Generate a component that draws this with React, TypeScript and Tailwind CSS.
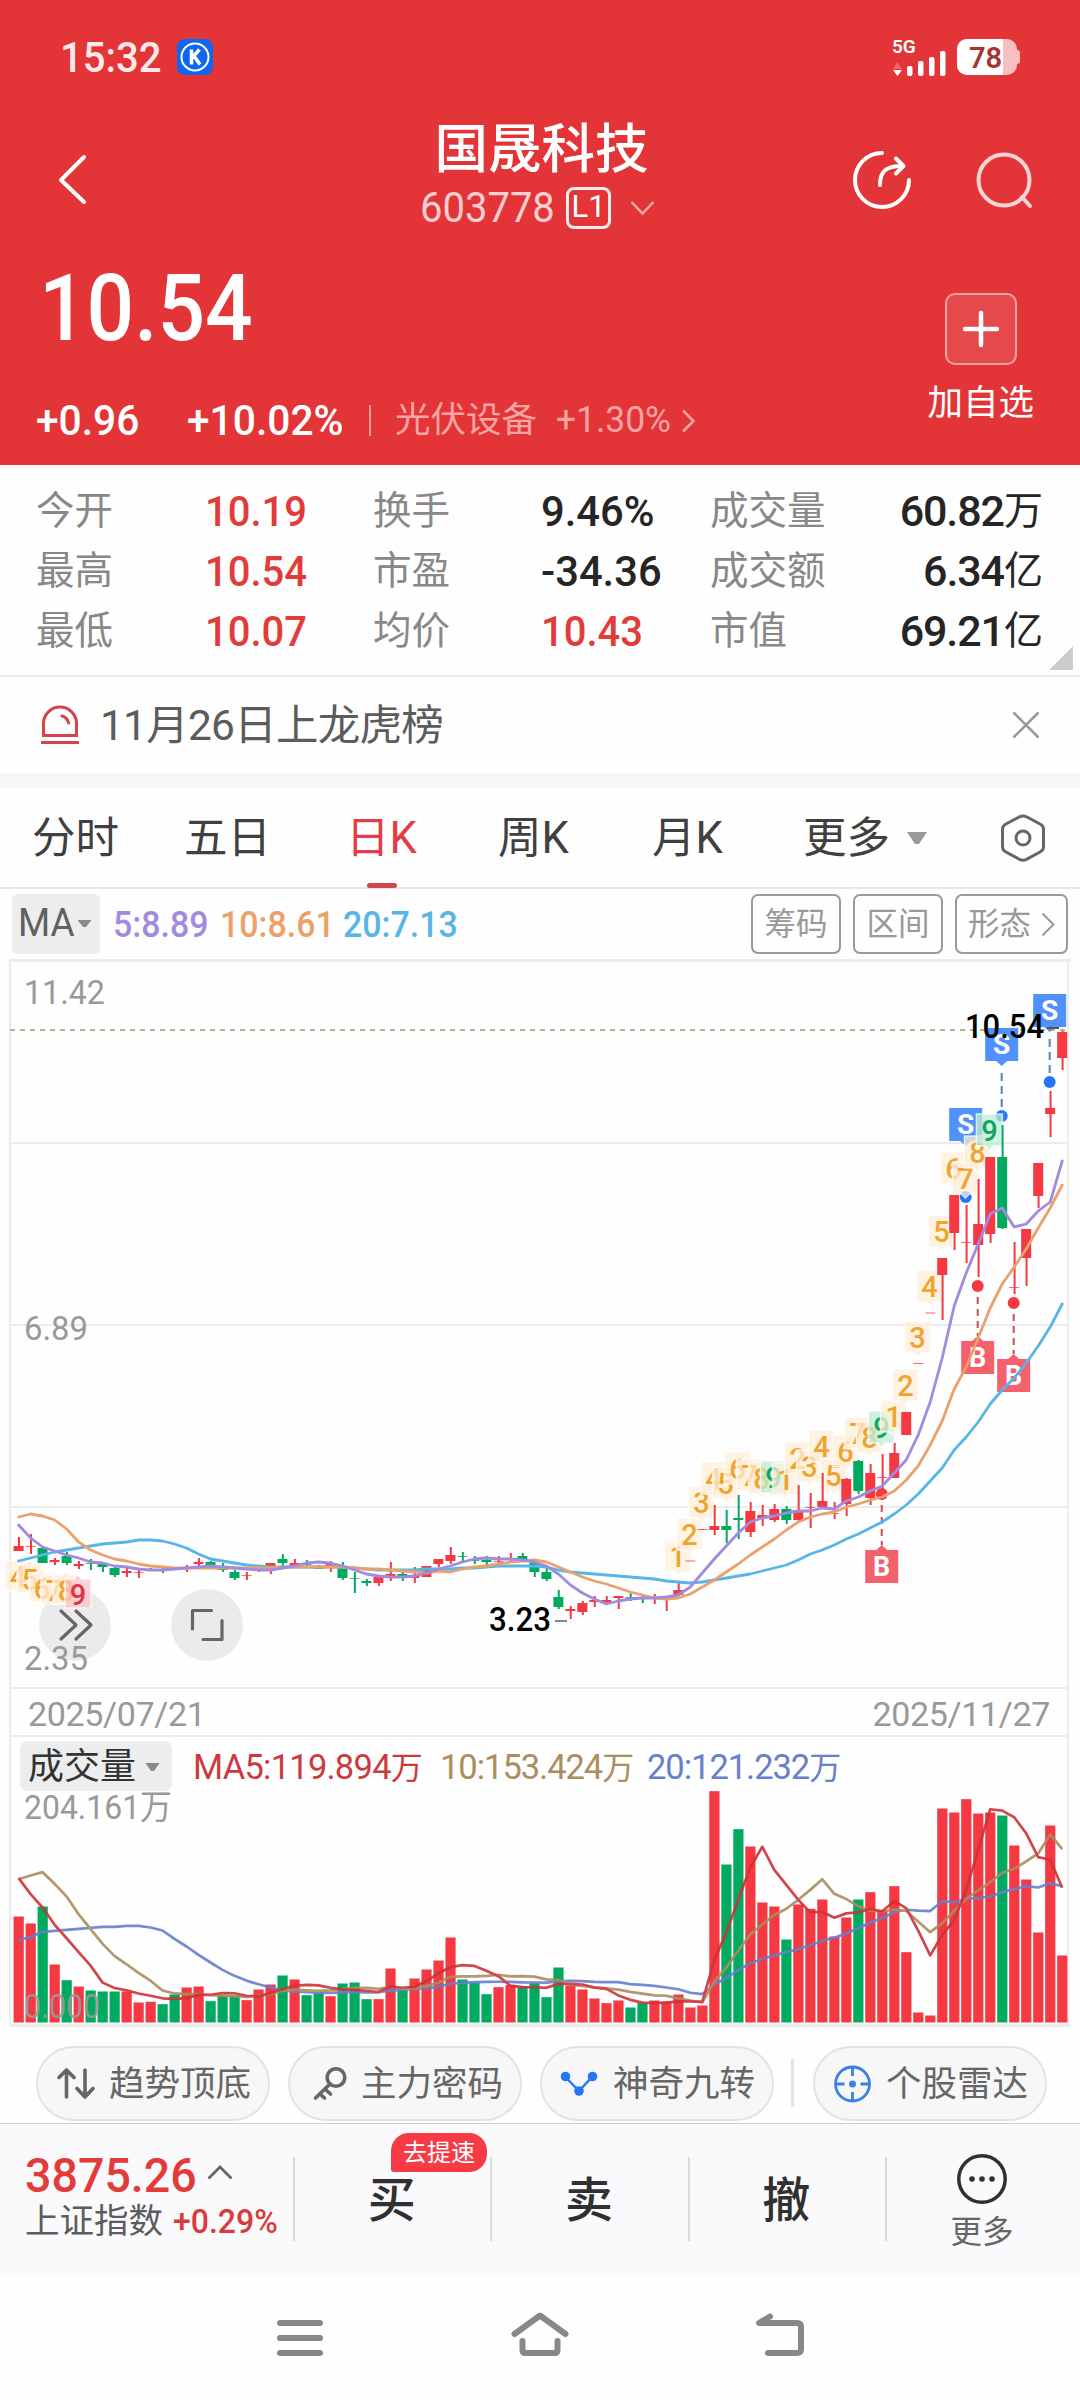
import type { ReactNode } from "react";

const FONT = "font-[Roboto,'Noto_Sans_CJK_SC',sans-serif]";
const NUM = "inline-block origin-left scale-x-[0.93] whitespace-nowrap";
const NUM_WIDE = "inline-block origin-left scale-x-[0.97] whitespace-nowrap";

const RED = "#f53842";
const GREEN = "#02aa60";

type Candle = [color: string, high: number, top: number, bottom: number, low: number];

const candles: Candle[] = [
  ["r", 1537, 1546, 1551, 1551], ["r", 1534, 1546, 1547, 1554], ["g", 1547, 1548, 1563, 1563], ["r", 1558, 1560, 1562, 1565],
  ["g", 1552, 1556, 1563, 1565], ["r", 1561, 1564, 1566, 1569], ["g", 1559, 1563, 1564, 1570], ["g", 1562, 1564, 1567, 1572],
  ["g", 1567, 1568, 1575, 1577], ["r", 1568, 1571, 1573, 1577], ["r", 1570, 1572, 1573, 1578], ["g", 1568, 1569, 1570, 1571],
  ["g", 1566, 1570, 1571, 1573], ["r", 1567, 1568, 1569, 1570], ["r", 1565, 1568, 1569, 1572], ["r", 1558, 1562, 1564, 1568],
  ["g", 1561, 1562, 1566, 1569], ["g", 1563, 1567, 1570, 1572], ["g", 1570, 1572, 1578, 1580], ["r", 1572, 1575, 1576, 1580],
  ["r", 1568, 1570, 1571, 1572], ["r", 1563, 1563, 1566, 1574], ["g", 1554, 1559, 1563, 1566], ["r", 1559, 1563, 1565, 1567],
  ["g", 1560, 1564, 1565, 1567], ["g", 1565, 1567, 1569, 1569], ["r", 1561, 1564, 1566, 1572], ["g", 1562, 1568, 1578, 1580],
  ["g", 1572, 1578, 1579, 1593], ["g", 1579, 1581, 1583, 1586], ["r", 1577, 1577, 1583, 1586], ["r", 1562, 1574, 1576, 1581],
  ["g", 1572, 1574, 1576, 1581], ["r", 1567, 1576, 1578, 1583], ["r", 1566, 1566, 1577, 1577], ["r", 1559, 1559, 1564, 1567],
  ["r", 1547, 1555, 1561, 1564], ["g", 1552, 1556, 1557, 1561], ["g", 1556, 1560, 1561, 1564], ["g", 1556, 1560, 1562, 1565],
  ["r", 1556, 1561, 1562, 1565], ["r", 1553, 1558, 1560, 1561], ["g", 1553, 1556, 1560, 1560], ["g", 1562, 1563, 1572, 1577],
  ["g", 1568, 1572, 1579, 1581], ["g", 1590, 1597, 1607, 1609], ["r", 1606, 1609, 1611, 1619], ["r", 1601, 1603, 1612, 1615],
  ["r", 1596, 1600, 1602, 1607], ["r", 1596, 1600, 1602, 1603], ["r", 1596, 1596, 1598, 1609], ["g", 1593, 1597, 1598, 1601],
  ["g", 1595, 1598, 1599, 1603], ["r", 1594, 1598, 1599, 1604], ["r", 1596, 1598, 1600, 1611], ["r", 1583, 1590, 1595, 1595],
  ["r", 1561, 1560.5, 1561.5, 1561], ["r", 1529, 1529, 1530, 1530], ["r", 1505, 1526, 1530, 1535], ["g", 1510, 1526, 1530, 1543],
  ["g", 1495, 1518, 1520, 1539], ["r", 1502, 1511, 1532, 1537], ["r", 1505, 1515, 1518, 1526], ["r", 1504, 1509, 1520, 1522],
  ["g", 1506, 1509, 1520, 1524], ["r", 1485, 1510, 1520, 1523], ["r", 1493, 1507, 1508, 1528], ["r", 1473, 1501, 1507, 1508],
  ["r", 1502, 1513, 1514, 1519], ["r", 1478, 1479, 1504, 1516], ["g", 1460, 1461, 1491, 1494], ["r", 1464, 1473, 1498, 1505],
  ["r", 1454, 1477, 1478, 1490], ["r", 1443, 1453, 1478, 1478], ["r", 1412, 1412, 1435, 1435], ["r", 1364, 1363, 1364, 1364],
  ["r", 1313, 1312.5, 1313.5, 1313], ["r", 1258, 1258, 1275, 1320], ["r", 1195, 1195, 1233, 1250], ["r", 1205, 1242, 1243, 1263],
  ["r", 1179, 1224, 1245, 1277], ["r", 1157, 1157, 1234, 1243], ["g", 1125, 1157, 1228, 1229], ["r", 1242, 1287, 1288, 1294],
  ["r", 1229, 1229, 1258, 1286], ["r", 1163, 1163, 1196, 1208], ["r", 1091, 1108, 1114, 1137], ["r", 1031, 1032, 1058, 1070],
];

const ma5 = [
  1525, 1538, 1547, 1551, 1555, 1558, 1562, 1563, 1566, 1567, 1569, 1570, 1570, 1569, 1568, 1567, 1566, 1567, 1568, 1569, 1570, 1570,
  1568, 1566, 1563, 1562, 1563, 1566, 1570, 1574, 1576, 1577, 1577, 1576, 1573, 1569, 1566, 1562, 1559, 1558, 1559, 1559, 1560, 1562,
  1566, 1574, 1585, 1593, 1599, 1604, 1601, 1599, 1598, 1598, 1597, 1595, 1587, 1573, 1559, 1546, 1533, 1522, 1518, 1516, 1513, 1511,
  1511, 1508, 1509, 1501, 1497, 1491, 1486, 1473, 1460, 1435, 1402, 1358, 1306, 1273, 1244, 1214, 1208, 1227, 1224, 1211, 1202, 1161,
];
const ma10 = [
  1517, 1514, 1516, 1520, 1529, 1542, 1550, 1555, 1559, 1561, 1564, 1566, 1567, 1568, 1568, 1568, 1568, 1568, 1568, 1568, 1568, 1568,
  1567, 1567, 1567, 1567, 1567, 1567, 1568, 1569, 1569, 1570, 1571, 1572, 1573, 1571, 1572, 1569, 1567, 1566, 1564, 1562, 1561, 1560,
  1562, 1567, 1572, 1577, 1581, 1584, 1588, 1592, 1595, 1598, 1599, 1598, 1594, 1587, 1580, 1572, 1564, 1555, 1547, 1539, 1530, 1522,
  1517, 1514, 1512, 1507, 1504, 1500, 1497, 1491, 1480, 1466, 1445, 1421, 1389, 1367, 1338, 1308, 1284, 1267, 1249, 1228, 1208, 1185,
];
const ma20 = [
  1561, 1558, 1555, 1552, 1550, 1548, 1546, 1544, 1543, 1542, 1540, 1540, 1541, 1544, 1548, 1554, 1559, 1561, 1563, 1565, 1566, 1567,
  1567, 1567, 1567, 1567, 1567, 1567, 1568, 1569, 1570, 1570, 1570, 1570, 1569, 1569, 1569, 1568, 1568, 1567, 1566, 1566, 1566, 1566,
  1567, 1570, 1572, 1573, 1574, 1575, 1576, 1577, 1578, 1579, 1581, 1582, 1583, 1582, 1580, 1578, 1576, 1574, 1571, 1568, 1565, 1560,
  1554, 1550, 1545, 1539, 1534, 1528, 1522, 1514, 1505, 1494, 1481, 1468, 1450, 1437, 1422, 1404, 1390, 1378, 1363, 1346, 1327, 1304,
];

const volumes = [
  318, 297, 348, 174, 127, 108, 96, 93, 93, 93, 60, 62, 55, 84, 105, 108, 64, 81, 81, 67, 99, 114, 141, 129, 82, 90, 79, 117, 120, 70,
  70, 162, 99, 132, 159, 186, 255, 129, 120, 85, 106, 112, 108, 118, 76, 165, 111, 99, 72, 58, 66, 45, 58, 66, 63, 84, 45, 51, 694, 474,
  580, 528, 360, 348, 249, 354, 341, 369, 258, 315, 369, 391, 336, 409, 211, 30, 21, 642, 630, 670, 627, 630, 621, 531, 429, 270, 591, 201,
];
// green volume bars, where they differ from the candle colour
const volGreen = new Set([
  2, 4, 6, 7, 8, 12, 13, 16, 17, 18, 22, 24, 25, 27, 28, 29, 32, 37, 38, 39, 42, 43, 44, 45, 51, 52, 59, 60, 64, 70, 82,
]);

const vma5Head = [433, 385, 345, 293];
const vma10Head = [430, 441, 451, 416, 378, 325, 280, 236, 199];
const vma20Head = [248, 256, 272, 275, 278, 281, 284, 287, 287, 290, 290, 285, 276, 251, 228, 203, 180, 158, 140];

const cx = (i: number) => 18.6 + i * 11.995;
const toPoints = (ys: number[]) => ys.map((y, i) => `${cx(i).toFixed(1)},${y}`).join(" ");

function movingAverage(head: number[], n: number) {
  return volumes.map((_, i) => {
    const v = i < n - 1 ? head[i] : volumes.slice(i - n + 1, i + 1).reduce((a, b) => a + b, 0) / n;
    return 2022.5 - v / 3;
  });
}

const upTags: [string, number][] = [
  ["1", 55], ["2", 56], ["3", 57], ["4", 58], ["5", 59], ["6", 60], ["7", 61], ["8", 62], ["9", 63],
  ["1", 64], ["2", 65], ["3", 66], ["4", 67], ["5", 68], ["6", 69], ["7", 70], ["8", 71], ["9", 72],
  ["1", 73], ["2", 74], ["3", 75], ["4", 76], ["5", 77], ["6", 78], ["7", 79], ["8", 80], ["9", 81],
];
const downTags: [string, number][] = [["4", 0], ["5", 1], ["6", 2], ["7", 3], ["8", 4], ["9", 5]];

function Tag({ n, x, y, down }: { n: string; x: number; y: number; down?: boolean }) {
  const nine = n === "9";
  const fill = nine ? (down ? "#f9c3c8" : "#bfecd6") : "#fdeeda";
  const color = nine ? (down ? "#dc3646" : "#12a560") : "#efa42f";
  const d = down
    ? `M${x - 13} ${y + 4}h9l4 -4l4 4h9v29h-26z`
    : `M${x - 13} ${y}h26v32h-9l-4 4l-4 -4h-9z`;
  return (
    <g>
      <path d={d} fill={fill} fillOpacity={0.75} stroke="#fff" strokeOpacity={0.7} strokeWidth={1.5} />
      <text x={x} y={down ? y + 30 : y + 27} textAnchor="middle" fontSize={29} fontWeight={500} fill={color}>{n}</text>
    </g>
  );
}

function Sell({ i, y, dot }: { i: number; y: number; dot: number }) {
  const x = cx(i) - 0.5;
  return (
    <g>
      <line x1={x} y1={y + 45} x2={x} y2={dot} stroke="#4b86b8" strokeWidth={2} strokeDasharray="8 5" />
      <circle cx={x} cy={dot} r={6} fill="#2478f8" />
      <path d={`M${x - 16.5} ${y}h33v33h-11l-5.5 5l-5.5 -5h-11z`} fill="#5191fb" />
      <text x={x} y={y + 26} textAnchor="middle" fontSize={28} fontWeight={700} fill="#fff">S</text>
    </g>
  );
}

function Buy({ i, y, dot }: { i: number; y: number; dot: number }) {
  const x = cx(i) - 0.5;
  return (
    <g>
      <line x1={x} y1={dot + 11} x2={x} y2={y - 5} stroke="#c0505a" strokeWidth={2} strokeDasharray="7 5" />
      <circle cx={x} cy={dot} r={6} fill={RED} />
      <path d={`M${x - 16.5} ${y}h11l5.5 -5l5.5 5h11v33h-33z`} fill="#f4606c" />
      <text x={x} y={y + 26} textAnchor="middle" fontSize={27} fontWeight={700} fill="#fff">B</text>
    </g>
  );
}

function PriceChart() {
  return (
    <svg className="block" width="1080" height="731" viewBox="0 959 1080 731" fontFamily="Roboto, sans-serif">
      <rect x="10" y="959" width="1061" height="3" fill="#ececec" />
      <rect x="9" y="960" width="2" height="730" fill="#ececec" />
      <rect x="1067" y="960" width="2" height="730" fill="#ececec" />
      {[1143, 1325, 1507, 1688].map((y) => (
        <rect key={y} x="10" y={y - 1} width="1058" height="2" fill="#ececec" />
      ))}
      <line x1="10" y1="1030" x2="1068" y2="1030" stroke="#c4b087" strokeWidth="2" strokeDasharray="5 5" />

      <circle cx="75" cy="1625" r="36" fill="#ebebeb" />
      <circle cx="207" cy="1625" r="36" fill="#ebebeb" />

      <Sell i={86} y={994} dot={1082} />
      <Sell i={82} y={1028} dot={1116} />
      <Sell i={79} y={1108} dot={1197} />
      {upTags.map(([n, i]) => <Tag key={i} n={n} x={cx(i) - 0.8} y={candles[i][1] - 43} />)}
      {downTags.map(([n, i]) => <Tag key={i} n={n} x={cx(i) - 0.6} y={candles[i][4] + 6} down />)}

      {candles.map(([c, high, top, bottom, low], i) => {
        const fill = c === "r" ? RED : GREEN;
        const thin = bottom - top <= 1;
        return (
          <g key={i} fill={fill}>
            <rect x={cx(i) - 0.6} y={high} width={2} height={low - high} />
            <rect x={cx(i) - 5} y={top} width={10} height={bottom - top} opacity={thin ? 0.75 : 1} />
          </g>
        );
      })}

      <Buy i={80} y={1341} dot={1286} />
      <Buy i={83} y={1359} dot={1303} />
      <Buy i={72} y={1550} dot={1494} />

      <g fill="none" stroke="#666" strokeWidth="3.2" strokeLinecap="round" strokeLinejoin="round">
        <path d="M61 1611l15 14l-15 14M76 1611l15 14l-15 14" />
        <path d="M192.500 1629v-18.500h19M203 1639.500h19v-19" />
      </g>

      <g fill="none" strokeWidth="2.8" strokeLinejoin="round" strokeLinecap="round">
        <polyline points={toPoints(ma20)} stroke="#57b5e8" />
        <polyline points={toPoints(ma10)} stroke="#e9a26c" />
        <polyline points={toPoints(ma5)} stroke="#a18bdf" />
      </g>

      <rect x="1047" y="1027" width="12" height="2" fill="#555" />
      <rect x="555" y="1620" width="12" height="2" fill="#888" />
      <g fontSize="34">
        <text x="24" y="1004" textLength="81" lengthAdjust="spacingAndGlyphs" fill="#999">11.42</text>
        <text x="24" y="1340" textLength="64" lengthAdjust="spacingAndGlyphs" fill="#999">6.89</text>
        <text x="24" y="1670" textLength="64" lengthAdjust="spacingAndGlyphs" fill="#999">2.35</text>
        <text x="965" y="1038" textLength="79" lengthAdjust="spacingAndGlyphs" fontWeight="500" fill="#000">10.54</text>
        <text x="489" y="1631" textLength="62" lengthAdjust="spacingAndGlyphs" fontWeight="500" fill="#000">3.23</text>
      </g>
    </svg>
  );
}

function VolumeChart() {
  return (
    <svg className="block overflow-visible" width="1080" height="237" viewBox="0 1791 1080 237" fontFamily="Roboto, 'Noto Sans CJK SC', sans-serif">
      <rect x="9" y="1791" width="2" height="235" fill="#ececec" />
      <rect x="1067" y="1791" width="2" height="235" fill="#ececec" />
      <rect x="9" y="2024" width="1062" height="3" fill="#ececec" />
      {volumes.map((v, i) => (
        <rect key={i} x={cx(i) - 5} y={2022.5 - v / 3} width={10.2} height={v / 3} fill={volGreen.has(i) ? GREEN : RED} />
      ))}
      <g fill="none" strokeWidth="2.7" strokeLinejoin="round" opacity="0.9">
        <polyline points={toPoints(movingAverage(vma20Head, 20))} stroke="#6680cc" />
        <polyline points={toPoints(movingAverage(vma10Head, 10))} stroke="#ab8d5f" />
        <polyline points={toPoints(movingAverage(vma5Head, 5))} stroke="#cc3338" />
      </g>
      <text x="24" y="1819" fontSize="34" textLength="148" lengthAdjust="spacingAndGlyphs" fill="#999">204.161万</text>
      <text x="24" y="2018" fontSize="34" textLength="76" lengthAdjust="spacingAndGlyphs" fill="#999" opacity="0.9">0.000</text>
    </svg>
  );
}

function Header() {
  return (
    <header className="h-[465px] bg-[#e33537] text-white">
      <div className="flex h-[114px] items-center justify-between pr-[60px] pl-[60px]">
        <div className="flex items-center">
          <span className={`${NUM} w-[117px] text-[43px] font-medium text-[#ffe9e9]`}>15:32</span>
          <svg width="36" height="36" viewBox="0 0 36 36">
            <rect width="36" height="36" rx="8" fill="#0f66f0" />
            <circle cx="18" cy="18" r="13.500" fill="none" stroke="#fff" strokeWidth="2" />
            <path d="M14.500 10.500v15M22.500 10.500l-7.500 8.500M17 17l6 8.500" fill="none" stroke="#fff" strokeWidth="3.500" />
          </svg>
        </div>
        <div className="flex items-center">
          <div className="mr-[10px] flex h-[38px] w-[55px] flex-col justify-between">
            <span className="h-[16px] text-[19px] leading-[18px] font-semibold">5G</span>
            <svg className="-mt-[8px]" width="55" height="27" viewBox="0 0 55 27">
              <path d="M1 20l4.500-7l4.500 7z" fill="#f0686a" />
              <path d="M1 21l4.500 6l4.500-6z" fill="#fff" />
              <g fill="#fff">
                <rect x="15" y="17" width="5.500" height="10" rx="2" />
                <rect x="26" y="12" width="5.500" height="15" rx="2" />
                <rect x="37" y="8" width="5.500" height="19" rx="2" />
                <rect x="48" y="2" width="5.500" height="25" rx="2" />
              </g>
            </svg>
          </div>
          <div className="flex items-center">
            <div className="flex h-[36px] w-[60px] items-center overflow-hidden rounded-[10px] bg-[#f6c0c1]">
              <div className="h-full w-[46px] bg-white pl-[12px] text-[30px] leading-[38px] font-semibold text-[#a93334]">
                <span className={NUM_WIDE}>78</span>
              </div>
            </div>
            <div className="h-[14px] w-[3px] rounded-r bg-[#f6c0c1]" />
          </div>
        </div>
      </div>

      <div className="flex h-[132px] items-center justify-between pr-[46px] pl-[56px]">
        <svg className="mr-[143px]" width="32" height="52" viewBox="0 0 32 52" fill="none" stroke="#fff" strokeWidth="4">
          <path d="M28 3L5 26l23 22" strokeLinecap="round" strokeLinejoin="round" />
        </svg>
        <div className="flex flex-col items-center pb-[10px]">
          <span className="h-[65px] text-[53.500px] leading-[67px] font-medium">国晟科技</span>
          <div className="flex h-[54px] items-center pr-[8px]">
            <span className={`${NUM} w-[146px] text-[43px] text-[#fbcfcf]`}>603778</span>
            <span className="flex h-[42px] w-[45px] items-center justify-center rounded-[8px] border-[3px] border-white/90 text-[31px]">
              L1
            </span>
            <svg className="ml-[19px]" width="25" height="16" viewBox="0 0 25 16" fill="none" stroke="#f5a9aa" strokeWidth="2.500">
              <path d="M1.500 2l11 11.500l11-11.500" />
            </svg>
          </div>
        </div>
        <div className="flex items-center gap-[62px]">
          <svg width="60" height="60" viewBox="0 0 60 60" fill="none" stroke="#fff" strokeWidth="4" strokeLinecap="round">
            <path d="M30 3a27 27 0 1 0 27 27" />
            <path d="M28 35c0-13 5-19 22-19M44 8.500l7.500 7.500l-7.500 7.500" strokeLinejoin="round" />
          </svg>
          <svg width="60" height="60" viewBox="0 0 60 60" fill="none" stroke="#f5d3d3" strokeWidth="4" strokeLinecap="round">
            <circle cx="30" cy="30" r="25.500" />
            <path d="M48 47l8 9" />
          </svg>
        </div>
      </div>

      <div className="flex justify-between">
        <div className="pl-[36px]">
          <div className="mt-[12px] h-[103px] pl-[3px] text-[92px] leading-[101px] font-medium">
            <span className="inline-block origin-left scale-x-[0.91]">10.54</span>
          </div>
          <div className="mt-[37px] flex h-[45px] items-center text-[42px]">
            <span className={`${NUM_WIDE} w-[151px] font-medium`}>+0.96</span>
            <span className={`${NUM_WIDE} w-[182px] font-medium`}>+10.02%</span>
            <span className="h-[31px] w-[2px] bg-white/50" />
            <span className="ml-[24px] w-[161px] text-[35.500px] text-[#f7a4a5]">光伏设备</span>
            <span className={`${NUM_WIDE} w-[125px] text-[36.500px] text-[#f7a4a5]`}>+1.30%</span>
            <svg width="15" height="24" viewBox="0 0 15 24" fill="none" stroke="#f7a4a5" strokeWidth="2.500">
              <path d="M2 1.500l10.500 10.500l-10.500 10.500" />
            </svg>
          </div>
        </div>
        <div className="mr-[46px] flex flex-col items-center">
          <div className="mt-[47px] flex size-[72px] items-center justify-center rounded-[10px] border-2 border-white/50 bg-white/10">
            <svg width="38" height="38" viewBox="0 0 38 38" stroke="#fff" strokeWidth="4.500" strokeLinecap="round">
              <path d="M19 3v32M3 19h32" />
            </svg>
          </div>
          <span className="mt-[15px] text-[35.500px] leading-[46px]">加自选</span>
        </div>
      </div>
    </header>
  );
}

const stats = [
  ["今开", "10.19", "换手", "9.46%", "成交量", "60.82万"],
  ["最高", "10.54", "市盈", "-34.36", "成交额", "6.34亿"],
  ["最低", "10.07", "均价", "10.43", "市值", "69.21亿"],
];

function Stats() {
  return (
    <section className="relative h-[212px] border-b-2 border-[#ebebeb] pt-[16px] text-[#252525]">
      {stats.map((r, k) => (
        <div key={r[0]} className="flex h-[60px] items-center pr-[37px] pl-[36px] text-[43px]">
          <span className="w-[169px] text-[38.500px] text-[#888]">{r[0]}</span>
          <span className={`${NUM} mr-[-12px] w-[180px] font-medium text-[#e23c3a]`}>{r[1]}</span>
          <span className="w-[168px] text-[38.500px] text-[#888]">{r[2]}</span>
          <span className={k === 2 ? `${NUM} mr-[-12px] w-[181px] font-medium text-[#e23c3a]` : `${NUM_WIDE} mr-[-12px] w-[181px] font-medium`}>{r[3]}</span>
          <span className="text-[38.500px] text-[#888]">{r[4]}</span>
          <span className="ml-auto flex items-center tracking-[-0.025em]">
            <span className="font-medium">{r[5].slice(0, -1)}</span>
            <span className="text-[39px] tracking-normal">{r[5].slice(-1)}</span>
          </span>
        </div>
      ))}
      <svg className="absolute right-[7px] bottom-[5px]" width="24" height="24">
        <path d="M24 0v24h-24z" fill="#ccc" />
      </svg>
    </section>
  );
}

function Notice() {
  return (
    <section className="flex h-[96px] items-center pr-[40px] pl-[41px]">
      <svg width="38" height="40" viewBox="0 0 38 40" fill="none" stroke="#d5444a" strokeWidth="3">
        <path d="M2.500 30.500v-12a16.500 16.500 0 0 1 33 0v12z" />
        <path d="M21 11c3.500 1 6 3.500 6.500 7M1 37.500h36" strokeLinecap="round" />
      </svg>
      <span className="ml-[21px] pt-[2px] text-[42.500px] tracking-[-0.018em] text-[#5c5c5c]">11月26日上龙虎榜</span>
      <svg className="ml-auto" width="28" height="28" viewBox="0 0 28 28" stroke="#999" strokeWidth="2.500">
        <path d="M1.500 1.500l25 25M26.500 1.500l-25 25" />
      </svg>
    </section>
  );
}

function Tabs() {
  return (
    <nav className="relative flex h-[101px] items-center border-b-2 border-[#e9e9e9] pl-[32px] text-[43.500px] text-[#404040]">
      <span className="w-[152px] pt-[3px]">分时</span>
      <span className="w-[162px] pt-[3px]">五日</span>
      <span className="w-[152px] pt-[3px] text-[#e33c46]">日K</span>
      <span className="w-[154px] pt-[3px]">周K</span>
      <span className="w-[151px] pt-[3px]">月K</span>
      <span className="w-[103px] pt-[3px]">更多</span>
      <svg width="22" height="14"><path d="M1 1h20l-8 12h-4z" fill="#999" /></svg>
      <svg className="ml-[72px]" width="46" height="48" viewBox="0 0 46 48" fill="none" stroke="#666" strokeWidth="3">
        <path d="M19.500 2.800q3.500-1.700 7 0l14 7.500q3 1.700 3 5v17.500q0 3.300-3 5l-14 7.500q-3.500 1.700-7 0l-14-7.500q-3-1.700-3-5v-17.500q0-3.300 3-5z" />
        <circle cx="23" cy="24" r="7" />
      </svg>
      <span className="absolute bottom-[-1px] left-[367px] h-[5px] w-[30px] rounded-full bg-[#d4464e]" />
    </nav>
  );
}

function Indicators() {
  return (
    <div className="flex h-[70px] items-center pr-[12px] pb-[1px] pl-[12px] text-[36.500px] font-medium">
      <span className="flex h-[60px] w-[88px] items-center rounded-[6px] bg-[#ededed] pl-[6px] text-[38px] font-normal text-[#606060]">
        <span className="w-[59px]"><span className={NUM_WIDE}>MA</span></span>
        <svg width="15" height="10"><path d="M0.500 1h14l-5.500 7h-3z" fill="#8a8a8a" /></svg>
      </span>
      <span className={`${NUM} mt-[3px] ml-[13px] w-[107px] text-[#a18bdf]`}>5:8.89</span>
      <span className={`${NUM} mt-[3px] w-[123px] text-[#eda067]`}>10:8.61</span>
      <span className={`${NUM} mt-[3px] text-[#57b5e8]`}>20:7.13</span>
      <div className="ml-auto flex gap-[12px] text-[31.500px] font-normal text-[#999]">
        <span className="flex h-[60px] w-[90px] items-center justify-center rounded-[7px] border-2 border-[#999] pt-[2px]">筹码</span>
        <span className="flex h-[60px] w-[90px] items-center justify-center rounded-[7px] border-2 border-[#999] pt-[2px]">区间</span>
        <span className="flex h-[60px] w-[113px] items-center justify-center gap-[10px] rounded-[7px] border-2 border-[#999] pt-[2px]">
          形态
          <svg width="14" height="25" viewBox="0 0 14 25" fill="none" stroke="#999" strokeWidth="2"><path d="M1.500 1.500l11 11l-11 11" /></svg>
        </span>
      </div>
    </div>
  );
}

function VolumeHeader() {
  return (
    <div className="mr-[11px] ml-[9px] flex h-[54px] items-center border-x-2 border-[#ececec] pt-[3px] pl-[9px] text-[34.500px]">
      <span className="flex h-[50px] w-[152px] items-center justify-between rounded-[8px] bg-[#ededed] pt-[3px] pr-[12px] pl-[8px] text-[36px] text-[#333]">
        成交量
        <svg width="15" height="10"><path d="M0.500 1h14l-5.500 8h-3z" fill="#8a8a8a" /></svg>
      </span>
      <span className="mt-[5px] ml-[21px] w-[247px] tracking-[-0.022em] text-[#cb3b3d]">MA5:119.894<span className="text-[32px]">万</span></span>
      <span className="mt-[5px] w-[207px] tracking-[-0.03em] text-[#ab8d5f]">10:153.424<span className="text-[32px]">万</span></span>
      <span className="mt-[5px] tracking-[-0.03em] text-[#6680cc]">20:121.232<span className="text-[32px]">万</span></span>
    </div>
  );
}

function Pill({ icon, children }: { icon: ReactNode; children: ReactNode }) {
  return (
    <span className="flex h-[75px] w-[234px] shrink-0 items-center rounded-full border-2 border-[#e3e3e3] bg-[#f7f7f7] pl-[17px] text-[35.500px] whitespace-nowrap text-[#666]">
      <span className="w-[54px]">{icon}</span>
      <span className="pt-[2px]">{children}</span>
    </span>
  );
}

function Pills() {
  return (
    <div className="flex h-[95px] items-start pt-[18px] pl-[36px]">
      <div className="flex gap-[18px]">
        <Pill
          icon={
            <svg width="40" height="36" viewBox="0 0 40 36" fill="none" stroke="#666" strokeWidth="3.600" strokeLinecap="round" strokeLinejoin="round">
              <path d="M11.500 31v-27M4 11.500l7.500-7.500l7.500 7.500M30 4v27M22 22.500l8 8.500l8-8.500" />
            </svg>
          }
        >
          趋势顶底
        </Pill>
        <Pill
          icon={
            <svg width="42" height="40" viewBox="0 0 42 40" fill="none" stroke="#666" strokeWidth="3.600" strokeLinecap="round">
              <circle cx="29" cy="13.500" r="8.800" />
              <path d="M23 20L8.500 34M13 30l4.500 4M18.500 25.500l5 4.500" />
            </svg>
          }
        >
          主力密码
        </Pill>
        <Pill
          icon={
            <svg width="40" height="36" viewBox="0 0 40 36" fill="#2478f5">
              <path d="M6 10.500l14 14.500l13.500-14.500" fill="none" stroke="#2478f5" strokeWidth="2.500" />
              <circle cx="6.500" cy="10.500" r="4.800" />
              <circle cx="33.500" cy="10.500" r="4.800" />
              <circle cx="20" cy="25" r="4.800" />
            </svg>
          }
        >
          神奇九转
        </Pill>
      </div>
      <span className="mt-[13px] ml-[17px] h-[48px] w-[3px] bg-[#e3e3e3]" />
      <span className="ml-[19px]">
        <Pill
          icon={
            <svg width="40" height="40" viewBox="0 0 40 40" fill="none" stroke="#3d7fe8" strokeWidth="2.800">
              <circle cx="20.500" cy="20" r="17" />
              <path d="M20.500 3v9M20.500 28v9M3.500 20h9M28.500 20h9" />
              <circle cx="20.500" cy="20" r="3.500" fill="#3d7fe8" stroke="none" />
            </svg>
          }
        >
          个股雷达
        </Pill>
      </span>
    </div>
  );
}

function TradeBar() {
  return (
    <div className="flex h-[151px] border-t border-[#cfcfcf] bg-[#fafafc] text-[48px] font-medium text-[#303030]">
      <div className="w-[293px] pt-[26px] pl-[25px]">
        <div className="flex h-[52px] items-center text-[#e23c3a]">
          <span className={`${NUM_WIDE} w-[182px]`}>3875.26</span>
          <svg className="-mt-[8px]" width="26" height="15" viewBox="0 0 26 15" fill="none" stroke="#666" strokeWidth="2.800">
            <path d="M1.500 13.500l11.500-11.500l11.500 11.500" />
          </svg>
        </div>
        <div className="flex h-[40px] items-center font-normal">
          <span className="w-[148px] text-[34.500px] whitespace-nowrap text-[#5c5c5c]">上证指数</span>
          <span className={`${NUM_WIDE} text-[33px] font-medium text-[#d93b3c]`}>+0.29%</span>
        </div>
      </div>
      {["买", "卖", "撤"].map((t) => (
        <div key={t} className="relative mt-[33px] flex h-[84px] w-[197.300px] items-center justify-center border-l-2 border-[#dcdcde] pt-[4px] pr-[2px]">
          {t}
          {t === "买" && (
            <span className="absolute top-[-24px] left-[96px] flex h-[39px] w-[96px] items-center justify-center rounded-[18px] rounded-bl-[3px] bg-[#f63b46] text-[24px] font-normal text-white">
              去提速
            </span>
          )}
        </div>
      ))}
      <div className="mt-[33px] flex h-[84px] flex-1 flex-col items-center border-l-2 border-[#dcdcde] pr-[3px]">
        <svg className="-mt-[3px] shrink-0" width="50" height="50" viewBox="0 0 50 50" fill="#303030">
          <circle cx="25" cy="25" r="23.200" fill="none" stroke="#303030" strokeWidth="3.500" />
          <circle cx="15" cy="25" r="2.800" />
          <circle cx="25" cy="25" r="2.800" />
          <circle cx="35" cy="25" r="2.800" />
        </svg>
        <span className="mt-[8px] text-[31.500px] leading-[42px] font-normal text-[#666]">更多</span>
      </div>
    </div>
  );
}

function SystemNav() {
  return (
    <div className="flex h-[126px] items-center justify-center gap-[180px]">
      <svg width="60" height="60" viewBox="0 0 60 60" stroke="#888" strokeWidth="6" strokeLinecap="round">
        <path d="M10 16h40M10 31h40M10 46h40" />
      </svg>
      <svg width="60" height="60" viewBox="0 0 60 60" fill="none" stroke="#888" strokeWidth="6" strokeLinecap="round" strokeLinejoin="round">
        <path d="M4.500 27l25.500-18.500l25.500 18.500M12.500 34v9q0 3 3 3h29q3 0 3-3v-9" />
      </svg>
      <svg width="60" height="60" viewBox="0 0 60 60" fill="none" stroke="#888" strokeWidth="6" strokeLinecap="round" strokeLinejoin="round">
        <path d="M20 9.500l-11 6.500h38q4 0 4 4v22q0 4-4 4h-29" />
      </svg>
    </div>
  );
}

export default function App() {
  return (
    <div className={`flex h-[2400px] w-[1080px] flex-col overflow-hidden bg-[#fefefe] ${FONT}`}>
      <Header />
      <Stats />
      <Notice />
      <div className="h-[15px] bg-[#f7f7f7]" />
      <Tabs />
      <Indicators />
      <PriceChart />
      <div className="mr-[11px] ml-[9px] flex h-[47px] items-center justify-between border-x-2 border-b-2 border-[#ececec] pt-[3px] pr-[17px] pl-[17px] text-[34px] tracking-[-0.01em] text-[#999]">
        <span>2025/07/21</span>
        <span>2025/11/27</span>
      </div>
      <VolumeHeader />
      <VolumeChart />
      <Pills />
      <TradeBar />
      <SystemNav />
    </div>
  );
}
